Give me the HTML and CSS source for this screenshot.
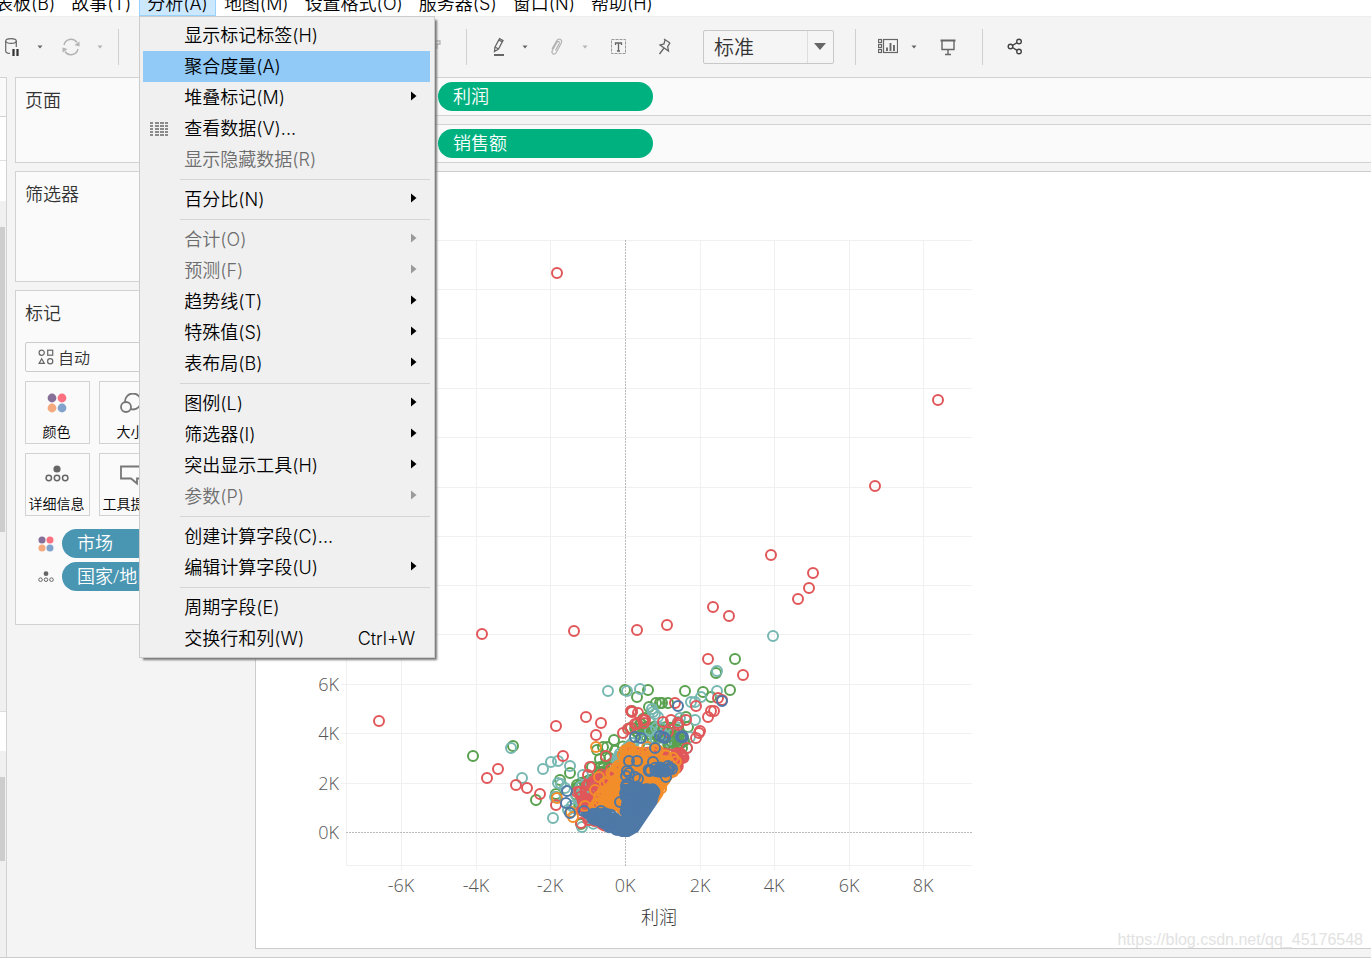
FILE: index.html
```html
<!DOCTYPE html>
<html lang="zh-CN">
<head>
<meta charset="utf-8">
<title>工作表</title>
<link rel="stylesheet" href="styles.css">
</head>
<body>
<svg class="defs" aria-hidden="true">
  <symbol id="i-caret" viewBox="0 0 6 4"><path d="M0.500 0.500h5L3 3.500z" fill="currentColor"/></symbol>
  <symbol id="i-sub" viewBox="0 0 6 10"><path d="M0 0.500v9L5.500 5z" fill="currentColor"/></symbol>
  <symbol id="i-four" viewBox="0 0 20 20"><circle cx="5" cy="5" r="4.400" fill="#866f98"/><circle cx="15" cy="5" r="4.400" fill="#fb7180"/><circle cx="5" cy="15" r="4.400" fill="#f4a97e"/><circle cx="15" cy="15" r="4.400" fill="#82a3cb"/></symbol>
  <symbol id="i-detail" viewBox="0 0 24 18"><circle cx="12" cy="4" r="3.600" fill="#666"/><g fill="none" stroke="#666" stroke-width="1.500"><circle cx="3.800" cy="13" r="2.700"/><circle cx="12" cy="13" r="2.700"/><circle cx="20.200" cy="13" r="2.700"/></g></symbol>
</svg>

<nav class="menubar" aria-label="主菜单">
  <button class="menu-title">仪表板(B)</button>
  <button class="menu-title">故事(T)</button>
  <div class="menu-host">
    <button class="menu-title open" aria-expanded="true">分析(A)</button>
    <div class="menu" role="menu">
      <button class="item first" role="menuitem">显示标记标签(H)</button>
      <button class="item active" role="menuitem">聚合度量(A)</button>
      <button class="item" role="menuitem">堆叠标记(M)<svg class="sub"><use href="#i-sub"/></svg></button>
      <button class="item" role="menuitem"><svg class="lead" viewBox="0 0 18 14"><path d="M0 1h3M5 1h4M10 1h4M15 1h3M0 4h3M5 4h4M10 4h4M15 4h3M0 7h3M5 7h4M10 7h4M15 7h3M0 10h3M5 10h4M10 10h4M15 10h3M0 13h3M5 13h4M10 13h4M15 13h3" stroke="#8a8a8a" stroke-width="1.800" fill="none"/></svg>查看数据(V)...</button>
      <button class="item" role="menuitem" disabled>显示隐藏数据(R)</button>
      <hr>
      <button class="item" role="menuitem">百分比(N)<svg class="sub"><use href="#i-sub"/></svg></button>
      <hr>
      <button class="item" role="menuitem" disabled>合计(O)<svg class="sub"><use href="#i-sub"/></svg></button>
      <button class="item" role="menuitem" disabled>预测(F)<svg class="sub"><use href="#i-sub"/></svg></button>
      <button class="item" role="menuitem">趋势线(T)<svg class="sub"><use href="#i-sub"/></svg></button>
      <button class="item" role="menuitem">特殊值(S)<svg class="sub"><use href="#i-sub"/></svg></button>
      <button class="item" role="menuitem">表布局(B)<svg class="sub"><use href="#i-sub"/></svg></button>
      <hr>
      <button class="item" role="menuitem">图例(L)<svg class="sub"><use href="#i-sub"/></svg></button>
      <button class="item" role="menuitem">筛选器(I)<svg class="sub"><use href="#i-sub"/></svg></button>
      <button class="item" role="menuitem">突出显示工具(H)<svg class="sub"><use href="#i-sub"/></svg></button>
      <button class="item" role="menuitem" disabled>参数(P)<svg class="sub"><use href="#i-sub"/></svg></button>
      <hr>
      <button class="item" role="menuitem">创建计算字段(C)...</button>
      <button class="item" role="menuitem">编辑计算字段(U)<svg class="sub"><use href="#i-sub"/></svg></button>
      <hr>
      <button class="item" role="menuitem">周期字段(E)</button>
      <button class="item" role="menuitem">交换行和列(W)<kbd>Ctrl+W</kbd></button>
    </div>
  </div>
  <button class="menu-title">地图(M)</button>
  <button class="menu-title">设置格式(O)</button>
  <button class="menu-title">服务器(S)</button>
  <button class="menu-title">窗口(N)</button>
  <button class="menu-title">帮助(H)</button>
</nav>

<div class="toolbar" role="toolbar" aria-label="工具栏">
  <div class="group source">
    <button class="tool" aria-label="暂停自动更新"><svg width="18" height="20" viewBox="0 0 18 20" fill="none" stroke="#666" stroke-width="1.200"><ellipse cx="8" cy="4" rx="5.300" ry="2.400"/><path d="M2.700 4v10c0 1.500 2 2.400 4.300 2.400M13.300 4v6"/><path d="M10.500 12v7M14.500 12v7" stroke="#333" stroke-width="2.200"/></svg></button>
    <button class="drop" aria-label="更新选项"><svg><use href="#i-caret"/></svg></button>
    <button class="tool wide off" aria-label="刷新"><svg width="18" height="18" viewBox="0 0 18 18" fill="none" stroke="currentColor" stroke-width="1.400"><path d="M2 7a7.200 7.200 0 0 1 13-2.500M16 11a7.200 7.200 0 0 1-13 2.500"/><path d="M17.500 3.500v5l-5-1.500zM.5 14.500v-5l5 1.500z" fill="currentColor" stroke="none"/></svg></button>
    <button class="drop off" aria-label="刷新选项"><svg><use href="#i-caret"/></svg></button>
  </div>
  <div class="group format">
    <button class="tool off" aria-label="排序"><svg width="22" height="20" viewBox="0 0 22 20" fill="none" stroke="currentColor" stroke-width="1.300"><path d="M5 4h16v3H5M5 7h13v4H5M5 11h8v4H5"/></svg></button>
  </div>
  <div class="group edit">
    <button class="tool" aria-label="突出显示"><svg width="18" height="20" viewBox="0 0 18 20" fill="none" stroke="#666" stroke-width="1.300"><path d="M5 10L9.500 1.700l3.500 1.800L8.500 12l-4 2.500zM5 10l3.500 2M8.800 3l3.500 1.900"/><path d="M4 18h10" stroke-width="2"/></svg></button>
    <button class="drop" aria-label="突出显示选项"><svg><use href="#i-caret"/></svg></button>
    <button class="tool clip off" aria-label="组成员"><svg width="16" height="20" viewBox="0 0 16 20" fill="none" stroke="currentColor" stroke-width="1.200"><path d="M6.500 13.500l3.700-7c.9-2-1.200-2.800-2.200-1.200L3.300 13.500c-1.300 3.500 2.200 5 4 2l5-9.500c1.500-4-2.800-5.200-4.600-2.200L3 12"/></svg></button>
    <button class="drop off" aria-label="组选项"><svg><use href="#i-caret"/></svg></button>
    <button class="tool label" aria-label="显示标记标签"><svg width="18" height="18" viewBox="0 0 18 18" fill="none" stroke="#666"><rect x="1.500" y="1.500" width="14" height="14" stroke="#999" stroke-dasharray="3 1"/><path d="M5.500 7V5h6v2M8.500 5v8M7 13h3" stroke-width="1.300"/></svg></button>
    <button class="tool pin" aria-label="固定轴"><svg width="16" height="18" viewBox="0 0 16 18" fill="none" stroke="#666" stroke-width="1.300"><path d="M7 1l6 4M8 1.800L7 6 3 7l8.500 6-.8-4.500L13 4.800M7 10l-4.500 6"/></svg></button>
    <label class="fit"><select aria-label="适合"><option>标准</option></select><span class="fit-arrow"></span></label>
  </div>
  <div class="group view-tools">
    <button class="tool" aria-label="智能推荐"><svg width="20" height="18" viewBox="0 0 20 18" fill="none" stroke="#666" stroke-width="1.200"><rect x="0.500" y="1.500" width="3" height="3"/><rect x="0.500" y="6.500" width="3" height="3"/><rect x="0.500" y="11.500" width="3" height="3"/><rect x="5.500" y="1.500" width="14" height="13"/><path d="M9 13V9.500M12.500 13V5M16 13V7" stroke-width="1.900"/></svg></button>
    <button class="drop" aria-label="智能推荐选项"><svg><use href="#i-caret"/></svg></button>
    <button class="tool show" aria-label="演示模式"><svg width="18" height="18" viewBox="0 0 18 18" fill="none" stroke="#666" stroke-width="1.400"><path d="M1.500 2.500h15" stroke-width="2"/><path d="M3 3v8.500h12V3M9 11.500v5M6 16.500h6"/></svg></button>
  </div>
  <div class="group">
    <button class="tool share" aria-label="共享"><svg width="16" height="18" viewBox="0 0 16 18" fill="none" stroke="#444" stroke-width="1.400"><circle cx="3.500" cy="8.500" r="2.300"/><circle cx="12" cy="3.500" r="2.300"/><circle cx="12" cy="13.500" r="2.300"/><path d="M5.500 7.500L10 4.700M5.500 9.500l4.500 2.800"/></svg></button>
  </div>
</div>

<main class="workspace">
  <div class="data-pane">
    <div class="pane-head"></div>
    <div class="pane-search"></div>
    <div class="pane-title"></div>
    <div class="track upper"><span class="thumb"></span></div>
    <div class="pane-section"></div>
    <div class="track lower"><span class="thumb"></span></div>
  </div>

  <aside class="cards">
    <section class="card pages"><h2>页面</h2></section>
    <section class="card filters"><h2>筛选器</h2></section>
    <section class="card marks">
      <h2>标记</h2>
      <button class="mark-type"><svg width="16" height="16" viewBox="0 0 16 16" fill="none" stroke="#666" stroke-width="1.200"><circle cx="3.700" cy="3.700" r="2.600"/><rect x="9.700" y="1.200" width="5" height="5"/><path d="M3.700 9.800L6.300 14.400H1.100z"/><circle cx="12.200" cy="12.200" r="2.600"/></svg>自动</button>
      <div class="mark-grid">
        <button class="mark"><svg width="20" height="20"><use href="#i-four"/></svg>颜色</button>
        <button class="mark"><svg width="24" height="22" viewBox="0 0 24 22" fill="#fafafa" stroke="#777" stroke-width="1.800"><circle cx="14" cy="8.500" r="8"/><circle cx="7" cy="14" r="5"/></svg>大小</button>
        <button class="mark"><svg width="24" height="18"><use href="#i-detail"/></svg>详细信息</button>
        <button class="mark"><svg width="24" height="22" viewBox="0 0 24 22" fill="none" stroke="#777" stroke-width="1.800"><path d="M2 1.500h19v12h-3v5L12 13.500H2z"/></svg>工具提示</button>
      </div>
      <ul class="pills">
        <li><svg width="16" height="16"><use href="#i-four"/></svg><button class="pill blue">市场</button></li>
        <li><svg width="16" height="12"><use href="#i-detail"/></svg><button class="pill blue">国家/地区</button></li>
      </ul>
    </section>
  </aside>

  <div class="sheet">
    <div class="shelf"><button class="pill green">利润</button></div>
    <div class="shelf"><button class="pill green">销售额</button></div>
    <div class="view">
      <svg class="chart" viewBox="256 172 716 776" role="img" aria-label="利润与销售额散点图">
        <g class="grid">
          <path d="M346 240.500H972M341 289.500H972M341 338.500H972M341 388.500H972M341 437.500H972M341 487.500H972M341 536.500H972M341 585.500H972M341 634.500H972M341 684.500H972M341 733.500H972M341 783.500H972M346 865.500H972"/>
          <path d="M346.500 240V866M401.500 240V870M476.500 240V870M550.500 240V870M700.500 240V870M774.500 240V870M849.500 240V870M923.500 240V870"/>
        </g>
        <path class="zero" d="M346 832.500H972M625.500 240V866"/>
        <g id="marks"></g>
        <g class="axis end">
          <text x="339" y="691">6K</text><text x="339" y="740">4K</text><text x="339" y="790">2K</text><text x="339" y="839">0K</text>
        </g>
        <g class="axis mid">
          <text x="401" y="892">-6K</text><text x="476" y="892">-4K</text><text x="550" y="892">-2K</text><text x="625" y="892">0K</text><text x="700" y="892">2K</text><text x="774" y="892">4K</text><text x="849" y="892">6K</text><text x="923" y="892">8K</text>
          <text class="axis-title" x="659" y="924">利润</text>
        </g>
      </svg>
      <span class="watermark">https://blog.csdn.net/qq_45176548</span>
    </div>
  </div>
</main>
<script src="chart.js"></script>
</body>
</html>
```

FILE: styles.css
```css
* { box-sizing: border-box; }
html, body { height: 100%; }
body {
  margin: 0;
  overflow: hidden;
  display: flex;
  flex-direction: column;
  background: #f4f4f4;
  color: #333;
  font-family: "Open Sans", "Noto Sans CJK SC", sans-serif;
  font-size: 18px;
  font-weight: 350;
}
button {
  margin: 0;
  padding: 0;
  border: 0;
  background: none;
  color: inherit;
  font: inherit;
  text-align: left;
  white-space: nowrap;
}
svg { display: block; flex: none; }
.defs { position: absolute; width: 0; height: 0; }

.menubar {
  flex: none;
  display: flex;
  height: 25px;
  margin: -9px 0 0 -31px;
  background: #fff;
  color: #000;
  font-family: Inter, "Noto Sans CJK SC", sans-serif;
}
.menu-title {
  height: 25px;
  padding: 0 8px;
  line-height: 22px;
}
.menu-title.open {
  background: #cce8ff;
  box-shadow: inset 0 0 0 1px #99d1ff;
}
.menu-host { position: relative; }
.menu {
  position: absolute;
  z-index: 5;
  top: 25px;
  left: 0;
  width: 296px;
  padding: 0 4px 3px 3px;
  border: 1px solid #ccc;
  background: #f0f0f0;
  box-shadow: 3px 3px 2px -1px #777;
}
.item {
  display: flex;
  align-items: center;
  position: relative;
  width: 100%;
  height: 31px;
  padding: 0 13px 0 41px;
  line-height: 30px;
}
.item.first { margin-top: 3px; }
.item.active { background: #91c9f7; }
.item:disabled { color: #6d6d6d; }
.item:disabled .sub { color: #9a9a9a; }
.item kbd { margin-left: auto; padding-right: 2px; font: inherit; }
.sub { width: 6px; height: 10px; margin-left: auto; margin-bottom: 3px; }
.lead { position: absolute; left: 7px; top: 9px; width: 18px; height: 14px; }
.menu hr {
  height: 1px;
  margin: 4px 0 4px 37px;
  border: 0;
  background: #d5d5d5;
}

/* toolbar */
.toolbar {
  flex: none;
  display: flex;
  align-items: center;
  height: 61px;
  border-top: 1px solid #eee;
}
.group {
  display: flex;
  align-items: center;
  height: 36px;
}
.group + .group { border-left: 1px solid #d0d0d0; }
.source { width: 118px; }
.format { width: 348px; justify-content: flex-end; padding-right: 20px; }
.edit { width: 389px; padding-left: 16px; }
.view-tools { width: 127px; padding-left: 16px; }
.tool, .drop {
  display: flex;
  justify-content: center;
  align-items: center;
  width: 32px;
  height: 32px;
  color: #666;
}
.source .tool { width: 24px; }
.source .tool.wide { width: 30px; }
.drop { width: 20px; }
.source .drop { width: 32px; }
.source .drop.off { width: 28px; }
.drop svg { width: 6px; height: 4px; }
.off { color: #b3b3b3; }
.clip { margin-left: 6px; }
.edit .drop.off { margin-left: 2px; }
.label { margin-left: 8px; }
.pin { margin-left: 14px; }
.show { margin-left: 8px; }
.share { margin-left: 16px; }
.fit {
  position: relative;
  width: 131px;
  height: 34px;
  margin-left: 22px;
}
.fit select {
  width: 100%;
  height: 34px;
  padding: 0 10px;
  border: 1px solid #c8c8c8;
  border-radius: 2px;
  background: #f5f5f5;
  color: #333;
  appearance: none;
  font: inherit;
  font-size: 20px;
}
.fit-arrow {
  position: absolute;
  top: 1px;
  right: 1px;
  width: 26px;
  height: 32px;
  border-left: 1px solid #ddd;
  pointer-events: none;
}
.fit-arrow::after {
  content: "";
  position: absolute;
  top: 12px;
  left: 6px;
  border: 6px solid transparent;
  border-top: 7px solid #666;
  border-bottom: 0;
}

/* workspace */
.workspace { flex: 1; min-height: 0; display: flex; border-bottom: 1px solid #ccc; }
.data-pane {
  flex: none;
  display: flex;
  flex-direction: column;
  width: 7px;
  border-right: 1px solid #d2d2d2;
  background: #fff;
}
.pane-head { height: 40px; border: solid #d2d2d2; border-width: 1px 0; background: #fafafa; }
.pane-search { height: 44px; border-bottom: 1px solid #e0e0e0; }
.pane-title { height: 40px; }
.track { background: #f0f0f0; }
.track .thumb { display: block; width: 5px; background: #cdcdcd; }
.upper { height: 510px; padding-top: 26px; }
.upper .thumb { height: 305px; }
.pane-section { height: 40px; border-top: 1px solid #ddd; }
.lower { flex: 1; padding-top: 26px; }
.lower .thumb { height: 84px; }

.cards {
  flex: none;
  display: flex;
  flex-direction: column;
  gap: 8px;
  width: 248px;
  padding: 0 8px;
}
.card {
  padding: 0 9px;
  border: 1px solid #d2d2d2;
  background: #fafafa;
}
.card h2 { margin: 0; font-size: 18px; font-weight: 350; line-height: 44px; }
.pages { height: 86px; }
.filters { height: 111px; }
.marks { height: 335px; }
.mark-type {
  display: flex;
  align-items: center;
  gap: 4px;
  width: 100%;
  height: 30px;
  margin-top: 7px;
  padding: 0 12px;
  border: 1px solid #ccc;
  border-radius: 2px;
  font-size: 16px;
}
.mark-grid {
  display: grid;
  grid-template-columns: repeat(2, 65px);
  gap: 9px;
  margin-top: 9px;
}
.mark {
  display: flex;
  flex-direction: column;
  align-items: center;
  justify-content: space-between;
  height: 63px;
  padding: 11px 2px 0 0;
  border: 1px solid #d2d2d2;
  color: #000;
  font-size: 14px;
  line-height: 22px;
}
.pills {
  display: grid;
  gap: 4px;
  margin: 13px 0 0;
  padding: 0;
  list-style: none;
}
.pills li { display: flex; align-items: center; gap: 8px; padding-left: 13px; }
.pill {
  height: 29px;
  padding: 0 15px;
  border-radius: 15px;
  color: #fff;
  line-height: 29px;
}
.blue { flex: 1; background: #4996b2; }
.green { width: 215px; background: #00b180; }

.sheet {
  flex: 1;
  min-width: 0;
  display: flex;
  flex-direction: column;
  gap: 8px;
  padding-bottom: 8px;
}
.shelf {
  flex: none;
  height: 39px;
  padding: 4px 0 0 182px;
  border: solid #d2d2d2;
  border-width: 1px 0 1px 1px;
  background: #fafafa;
}
.shelf .pill { display: block; }
.view {
  flex: 1;
  min-height: 0;
  position: relative;
  border: solid #ccc;
  border-width: 1px 0 1px 1px;
  background: #fff;
}
.chart { width: 716px; height: 776px; }
.grid { fill: none; stroke: #f0f0f0; }
.zero { fill: none; stroke: #bbb; stroke-dasharray: 2 1; }
.axis { fill: #555; font-size: 18px; font-weight: 300; }
.end { text-anchor: end; }
.mid { text-anchor: middle; }
.axis-title { fill: #333; }
.ring { fill: none; stroke-width: 2px; }
.watermark {
  position: absolute;
  right: 8px;
  bottom: 0;
  color: #e2e2e2;
  font-family: "Liberation Sans", sans-serif;
  font-size: 16px;
  font-weight: 400;
  line-height: 16px;
}
```

FILE: chart.js
```js
const NS = "http://www.w3.org/2000/svg";
const layer = document.getElementById("marks");

let seed = 7;
function random() {
  seed = (seed * 16807) % 2147483647;
  return seed / 2147483647;
}

function parse(list) {
  return list.trim().split(/\s+/).map(p => p.split(",").map(Number));
}

function inside(x, y, poly) {
  let hit = false;
  for (let i = 0, j = poly.length - 1; i < poly.length; j = i++) {
    const [xi, yi] = poly[i], [xj, yj] = poly[j];
    if ((yi > y) !== (yj > y) && x < (xj - xi) * (y - yi) / (yj - yi) + xi) hit = !hit;
  }
  return hit;
}

function scatter(list, count) {
  const poly = parse(list);
  const xs = poly.map(p => p[0]), ys = poly.map(p => p[1]);
  const x0 = Math.min(...xs), x1 = Math.max(...xs);
  const y0 = Math.min(...ys), y1 = Math.max(...ys);
  const out = [];
  while (out.length < count) {
    const x = x0 + random() * (x1 - x0), y = y0 + random() * (y1 - y0);
    if (inside(x, y, poly)) out.push([x, y]);
  }
  return out;
}

function rings(color, points) {
  for (const [x, y] of points) {
    const c = document.createElementNS(NS, "circle");
    c.setAttribute("class", "ring");
    c.setAttribute("cx", x);
    c.setAttribute("cy", y);
    c.setAttribute("r", 5);
    c.setAttribute("stroke", color);
    layer.append(c);
  }
}

function solid(color, list) {
  const p = document.createElementNS(NS, "polygon");
  p.setAttribute("points", list);
  p.setAttribute("fill", color);
  layer.append(p);
}

const green = "#59a14f", teal = "#76b7b2", red = "#e15759", orange = "#f28e2b", blue = "#4e79a7";

rings(green, parse("473,756 513,746 735,659 716,673 625,690 648,690 685,691 703,692 730,690 637,697 656,703 660,703 662,703 668,703 649,707 711,697 632,711 614,740 603,747 607,747 597,750 600,759 570,773 560,780 536,800 556,794 556,797 592,767 604,766 600,767 688,727 686,717 581,824 577,785 643,730 645,718 630,728"));
rings(green, scatter("632,722 655,726 678,728 686,745 640,745", 40));
rings(green, scatter("600,757 625,745 620,790 575,800 577,785 600,772", 45));
rings(green, scatter("574,800 590,820 605,826 600,800", 18));

rings(teal, parse("773,636 511,748 717,671 608,691 627,691 640,689 717,691 701,697 691,702 695,702 653,712 655,714 658,717 652,709 695,720 680,718 678,722 551,762 558,761 543,769 522,778 570,766 583,775 558,783 561,784 565,788 555,797 553,818 582,827 568,810 656,728 664,735 690,737 687,748"));
rings(teal, scatter("617,755 635,740 625,785 605,795", 45));
rings(teal, parse("650,731 655,738 661,728 667,741 673,734 646,739"));
rings(teal, scatter("577,785 600,780 610,815 595,826 570,808", 38));

rings(green, parse("672,742 678,744 684,741 676,735 669,745 682,748 643,719 641,724 660,745"));

rings(red, parse("557,273 938,400 875,486 771,555 813,573 809,588 798,599 713,607 729,616 667,625 637,630 574,631 482,634 708,659 743,675 379,721 586,717 556,726 601,723 596,735 563,756 498,769 487,778 516,785 527,788 540,794 556,805 631,711 632,712 638,713 708,717 711,711 714,711 718,698 722,700 675,703 696,706 699,733 700,731 696,738 687,748 623,733 628,729 631,728 637,724 643,720 645,720 671,720 686,720 678,725 678,723 663,722 668,732 644,723 635,724 590,767 588,775 606,756 589,785 577,792 580,792 585,798 581,823"));
rings(red, scatter("625,752 682,753 684,757 672,775 640,765", 130));
rings(red, scatter("608,770 625,765 622,800 585,810 578,790", 75));
rings(red, scatter("580,800 605,805 605,826 582,818", 22));

solid(orange, "622,752 655,758 680,764 674,776 655,804 632,832 618,812 596,806 602,795 610,782 618,768");
rings(orange, parse("596,747 599,777 557,798 595,790 573,817 571,812 585,806"));
rings(orange, scatter("626,746 655,745 663,755 676,755 680,762 672,774 655,800 620,812 584,810 602,792 600,785 618,765", 170));

solid(blue, "621,837 629,837 638,832 657,804 660,792 655,784 623,784 622,816 604,810 580,812 584,818 600,828");
rings(blue, parse("722,701 678,706 635,737 641,738 655,748 660,736 663,737 665,738 681,737 683,737 682,736 629,761 637,761 653,762 567,791 566,803 570,813 584,811 601,811 593,814 620,802 627,771 666,777 629,773 635,777 638,779 626,787 626,776 670,768 672,769 668,766"));
rings(blue, scatter("645,766 670,768 668,772 648,772", 20));
rings(blue, scatter("624,784 655,784 657,788 640,812 626,820", 70));
rings(blue, scatter("582,814 600,812 618,816 620,831 600,825", 45));
```
